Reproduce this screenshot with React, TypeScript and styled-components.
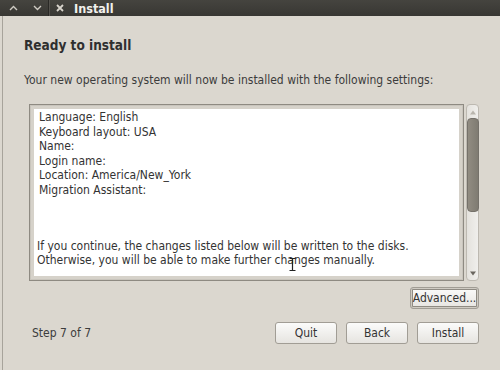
import styled, { createGlobalStyle } from "styled-components"

const Global = createGlobalStyle`
  html, body {
    margin: 0;
    padding: 0;
    background: #dbd7cf;
  }
  body {
    font-family: "DejaVu Sans Condensed", "DejaVu Sans", "Liberation Sans", sans-serif;
    font-stretch: condensed;
    color: #3c3c3c;
  }
`

const Window = styled.div`
  width: 500px;
  height: 370px;
  display: flex;
  flex-direction: column;
  overflow: hidden;
  position: relative;
  background: #dbd7cf;
`
const TitleBar = styled.div`
  height: 16px;
  flex: none;
  display: flex;
  align-items: center;
  background: linear-gradient(#45443f, #383733);
  color: #dfdbd2;
`
const TitleButton = styled.div<{ $w: number }>`
  width: ${p => p.$w}px;
  height: 16px;
  display: flex;
  align-items: center;
  justify-content: center;
`
const TitleSep = styled.div`
  width: 1px;
  height: 16px;
  background: #2a2926;
  border-right: 1px solid #55534e;
`
const TitleText = styled.span`
  margin-left: 4px;
  font-weight: bold;
  font-size: 12.5px;
  color: #f2f1ed;
`
const Frame = styled.div`
  flex: 1;
  display: flex;
  padding-left: 2px;
`
const Body = styled.div`
  flex: 1;
  border-left: 1px solid #a7a39b;
  padding: 20px 21px 0 21px;
  display: flex;
  flex-direction: column;
`
const Heading = styled.h1`
  margin: 0;
  font-size: 13.5px;
  font-weight: bold;
  color: #2f2f2f;
  line-height: 18px;
`
const Intro = styled.p`
  margin: 18px 0 0 0;
  font-size: 12px;
  line-height: 16px;
`
const SummaryRow = styled.div`
  margin: 16px 0 0 5px;
  display: flex;
  gap: 2px;
  height: 177px;
`
const TextBox = styled.div`
  flex: 1;
  border: 1px solid #8e8a82;
  box-shadow: inset 0 0 0 1px #c9c5bd;
  padding: 4px;
  background: #d6d2ca;
  display: flex;
`
const TextArea = styled.div`
  flex: 1;
  background: #fff;
  padding: 1px 0 0 3px;
  font-size: 12px;
  line-height: 14.6px;
  color: #333;
`
const Line = styled.div<{ $indent?: number }>`
  margin-left: ${p => p.$indent ?? 0}px;
  white-space: nowrap;
`
const Gap = styled.div`
  height: 41px;
`
const Scrollbar = styled.div`
  width: 11px;
  border: 1px solid #bdb9b1;
  border-radius: 4px;
  background: linear-gradient(90deg, #e4e2dd, #f0efec);
  display: flex;
  flex-direction: column;
  align-items: center;
  padding: 2px 0;
`
const Arrow = styled.div`
  height: 10px;
  display: flex;
  align-items: center;
  justify-content: center;
`
const Thumb = styled.div`
  width: 10px;
  height: 92px;
  margin-top: 1px;
  border-radius: 4px;
  background: linear-gradient(90deg, #918c82, #7f7b72);
  border: 1px solid #75716a;
`
const Track = styled.div`
  flex: 1;
`
const AdvancedRow = styled.div`
  display: flex;
  justify-content: flex-end;
  margin-top: 6px;
`
const Footer = styled.div`
  display: flex;
  align-items: center;
  margin-top: 13px;
  padding-left: 8px;
`
const Step = styled.span`
  font-size: 12px;
  flex: 1;
`
const Buttons = styled.div`
  display: flex;
  gap: 9px;
`
const Button = styled.button<{ $focus?: boolean; $w: number }>`
  width: ${p => p.$w}px;
  height: 22px;
  padding: 0;
  font-family: "DejaVu Sans Condensed", "DejaVu Sans", "Liberation Sans", sans-serif;
  font-stretch: condensed;
  font-size: 12px;
  color: #333;
  border: 1px solid #a19d95;
  border-radius: 3px;
  background: linear-gradient(#fbfbfa, #e6e4e0);
  box-shadow: ${p => (p.$focus ? "inset 0 0 0 1px #cfcbc3, inset 0 0 0 2px #8f8b83" : "none")};
`
const Cursor = styled.svg`
  position: absolute;
  left: 289px;
  top: 258px;
`

export default function App() {
  return (
    <Window>
      <Global />
      <TitleBar>
        <TitleButton $w={26}>
          <svg width="9" height="6" viewBox="0 0 9 6">
            <path d="M1 5 L4.5 1.5 L8 5" stroke="#cfcbc3" strokeWidth="1.4" fill="none" />
          </svg>
        </TitleButton>
        <TitleButton $w={22}>
          <svg width="9" height="6" viewBox="0 0 9 6">
            <path d="M1 1 L4.5 4.5 L8 1" stroke="#cfcbc3" strokeWidth="1.4" fill="none" />
          </svg>
        </TitleButton>
        <TitleSep />
        <TitleButton $w={20}>
          <svg width="8" height="8" viewBox="0 0 8 8">
            <path d="M1 1 L7 7 M7 1 L1 7" stroke="#d8d4cc" strokeWidth="1.8" />
          </svg>
        </TitleButton>
        <TitleText>Install</TitleText>
      </TitleBar>
      <Frame>
        <Body>
          <Heading>Ready to install</Heading>
          <Intro>Your new operating system will now be installed with the following settings:</Intro>
          <SummaryRow>
            <TextBox>
              <TextArea>
                <Line $indent={2}>Language: English</Line>
                <Line $indent={2}>Keyboard layout: USA</Line>
                <Line $indent={2}>Name:</Line>
                <Line $indent={2}>Login name:</Line>
                <Line $indent={2}>Location: America/New_York</Line>
                <Line $indent={2}>Migration Assistant:</Line>
                <Gap />
                <Line>If you continue, the changes listed below will be written to the disks.</Line>
                <Line>Otherwise, you will be able to make further changes manually.</Line>
              </TextArea>
            </TextBox>
            <Scrollbar>
              <Arrow>
                <svg width="6" height="5" viewBox="0 0 6 5">
                  <path d="M0 4.5 L3 0.5 L6 4.5 Z" fill="#b9b5ad" />
                </svg>
              </Arrow>
              <Thumb />
              <Track />
              <Arrow>
                <svg width="6" height="5" viewBox="0 0 6 5">
                  <path d="M0 0.5 L3 4.5 L6 0.5 Z" fill="#6a665f" />
                </svg>
              </Arrow>
            </Scrollbar>
          </SummaryRow>
          <AdvancedRow>
            <Button $w={69} $focus>Advanced...</Button>
          </AdvancedRow>
          <Footer>
            <Step>Step 7 of 7</Step>
            <Buttons>
              <Button $w={62}>Quit</Button>
              <Button $w={62}>Back</Button>
              <Button $w={62}>Install</Button>
            </Buttons>
          </Footer>
        </Body>
      </Frame>
      <Cursor width="7" height="13" viewBox="0 0 7 13">
        <path d="M0.5 0.5 H6.5 M3.5 0.5 V12.5 M0.5 12.5 H6.5" stroke="#222" strokeWidth="1.2" fill="none" />
      </Cursor>
    </Window>
  )
}
